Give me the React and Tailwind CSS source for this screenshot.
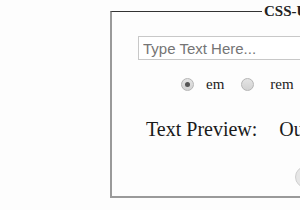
import React from "react";

// Radio bullet drawn by hand so the grey look matches
const Radio = ({ checked }) => (
  <span className="flex h-[13px] w-[13px] items-center justify-center rounded-full border border-[#b5b5b5] bg-gradient-to-b from-[#e4e4e4] to-[#d2d2d2]">
    {checked && <span className="h-[5px] w-[5px] rounded-full bg-[#555]" />}
  </span>
);

export default function App() {
  return (
    <div className="h-[210px] w-[300px] overflow-hidden bg-[#fdfdfd] pl-[110px] pt-[3px]">
      <fieldset className="h-[195px] w-[430px] border-t border-r-2 border-b-2 border-l-2 border-[#9a9a9a] border-t-[#333]">
        <legend className="ml-[150px] px-[2px] font-['Liberation_Serif',serif] text-[15px] font-bold leading-[17px] text-[#222]">
          CSS-Unit Converter
        </legend>

        {/* champ de saisie */}
        <input
          type="text"
          placeholder="Type Text Here..."
          className="ml-[26px] mt-[16px] block h-[24px] w-[300px] border border-[#c8c8c8] bg-white px-[4px] font-['Liberation_Sans',sans-serif] text-[15px] text-[#333] placeholder:text-[#757575] outline-none"
        />

        {/* choix de l'unité */}
        <div className="mt-[16px] flex items-center pl-[69px] font-['Liberation_Serif',serif] text-[15px] leading-[17px] text-[#222]">
          <Radio checked />
          <span className="ml-[12px]">em</span>
          <span className="ml-[17px]">
            <Radio />
          </span>
          <span className="ml-[16px]">rem</span>
        </div>

        {/* aperçu */}
        <div className="ml-[34px] mt-[25px] flex font-['Liberation_Serif',serif] text-[20px] leading-[23px] text-[#1a1a1a]">
          <span>Text Preview:</span>
          <span className="ml-[22px]">Output</span>
        </div>

        <button
          type="button"
          className="ml-[183px] mt-[25px] block h-[22px] w-[60px] rounded-full border border-[#cfcfcf] bg-[#e6e6e6]"
        />
      </fieldset>
    </div>
  );
}
